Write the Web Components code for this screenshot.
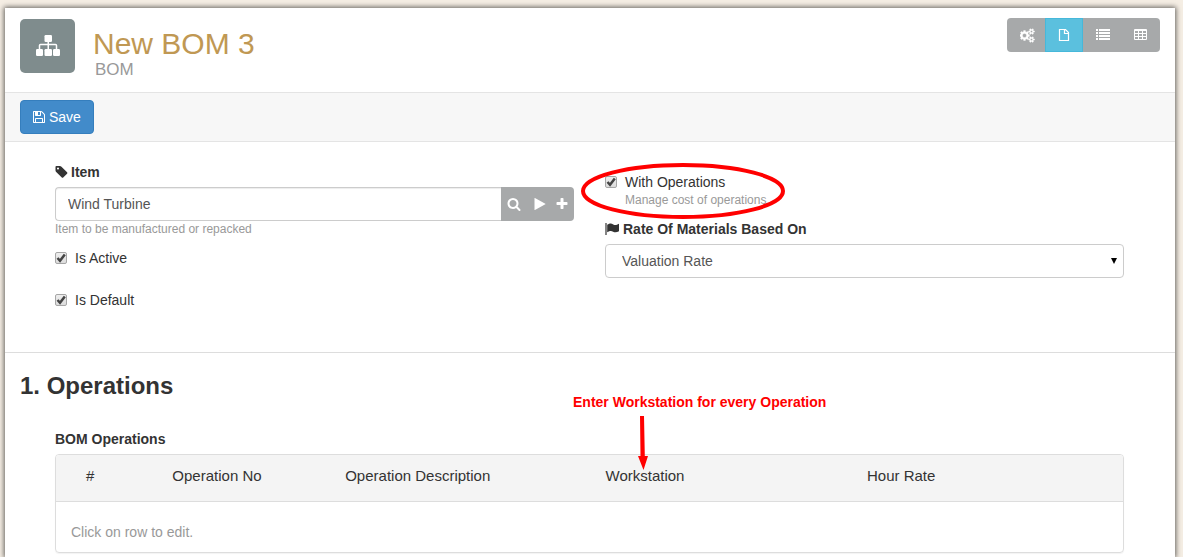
<!DOCTYPE html>
<html lang="en">
<head>
<meta charset="utf-8">
<meta name="viewport" content="width=device-width, initial-scale=1">
<title>New BOM 3</title>
<style>
body { margin: 0; background: #f5eee4; font: 14px/20px "Liberation Sans", Arial, sans-serif; color: #333; }
</style>
</head>
<body>
<bom-page>
  <page-header slot="head" icon="sitemap">
    <span slot="title">New BOM 3</span>
    <span slot="type">BOM</span>
    <view-switch slot="views"></view-switch>
  </page-header>
  <page-toolbar slot="head"><save-button>Save</save-button></page-toolbar>
  <form-section>
    <form-column slot="left">
      <link-field label="Item" value="Wind Turbine" help="Item to be manufactured or repacked"></link-field>
      <check-field label="Is Active"></check-field>
      <check-field label="Is Default"></check-field>
    </form-column>
    <form-column slot="right" class="second">
      <check-field class="marked" label="With Operations" help="Manage cost of operations"></check-field>
      <select-field label="Rate Of Materials Based On" value="Valuation Rate"></select-field>
    </form-column>
  </form-section>
  <operations-section>
    <span slot="title">1. Operations</span>
    <span slot="label">BOM Operations</span>
    <child-table></child-table>
    <span slot="note">Enter Workstation for every Operation</span>
  </operations-section>
</bom-page>

<script>
const icons = {
  sitemap: ["0 0 24 24", `<rect x="8.500" y="1" width="7.500" height="7" rx="1.200"/><rect x="0" y="15" width="7" height="7" rx="1.200"/><rect x="8.500" y="15" width="7.500" height="7" rx="1.200"/><rect x="17" y="15" width="7" height="7" rx="1.200"/><path d="M3.500 15v-3.500q0-1 1-1h15q1 0 1 1V15M12.250 8v7" fill="none" stroke="currentColor" stroke-width="1.500"/>`],
  save: ["0 0 1792 1792", `<path d="M512 1536h768v-384h-768v384zm896 0h128v-896q0-14-10-38.5t-20-34.5l-281-281q-10-10-34-20t-39-10v416q0 40-28 68t-68 28h-576q-40 0-68-28t-28-68v-416h-128v1280h128v-416q0-40 28-68t68-28h832q40 0 68 28t28 68v416zm-384-928v-320q0-13-9.5-22.5t-22.5-9.5h-192q-13 0-22.5 9.5t-9.5 22.5v320q0 13 9.5 22.5t22.5 9.5h192q13 0 22.5-9.5t9.5-22.5zm640 32v928q0 40-28 68t-68 28h-1344q-40 0-68-28t-28-68v-1344q0-40 28-68t68-28h928q40 0 88 20t76 48l280 280q28 28 48 76t20 88z"/>`],
  cogs: ["0 0 1920 1792", `<path stroke="currentColor" stroke-width="50" d="M832 896q0-106-75-181t-181-75-181 75-75 181 75 181 181 75 181-75 75-181zm768 512q0-52-38-90t-90-38-90 38-38 90q0 53 37.5 90.5t90.5 37.5 90.5-37.5 37.5-90.5zm0-1024q0-52-38-90t-90-38-90 38-38 90q0 53 37.5 90.5t90.5 37.5 90.5-37.5 37.5-90.5zm-384 421v185q0 10-7 19.5t-16 10.5l-155 24q-11 35-32 76 34 48 90 115 7 11 7 20 0 12-7 19-23 30-82.5 89.5t-78.5 59.5q-11 0-21-7l-115-90q-37 19-77 31-11 108-23 155-7 24-30 24h-186q-11 0-20-7.5t-10-17.5l-23-153q-34-10-75-31l-118 89q-7 7-20 7-11 0-21-8-144-133-144-160 0-9 7-19 10-14 41-53t47-61q-23-44-35-82l-152-24q-10-1-17-9.5t-7-19.5v-185q0-10 7-19.5t16-10.5l155-24q11-35 32-76-34-48-90-115-7-11-7-20 0-12 7-20 22-30 82-89t79-59q11 0 21 7l115 90q34-18 77-32 11-108 23-154 7-24 30-24h186q11 0 20 7.5t10 17.5l23 153q34 10 75 31l118-89q8-7 20-7 11 0 21 8 144 133 144 160 0 8-7 19-12 16-42 54t-45 60q23 48 34 82l152 23q10 2 17 10.5t7 19.5zm640 533v140q0 16-149 31-12 27-30 52 51 113 51 138 0 4-4 7-122 71-124 71-8 0-46-47t-52-68q-20 2-30 2t-30-2q-14 21-52 68t-46 47q-2 0-124-71-4-3-4-7 0-25 51-138-18-25-30-52-149-15-149-31v-140q0-16 149-31 13-29 30-52-51-113-51-138 0-4 4-7 4-2 35-20t59-34 30-16q8 0 46 46.5t52 67.5q20-2 30-2t30 2q51-71 92-112l6-2q4 0 124 70 4 3 4 7 0 25-51 138 17 23 30 52 149 15 149 31zm0-1024v140q0 16-149 31-12 27-30 52 51 113 51 138 0 4-4 7-122 71-124 71-8 0-46-47t-52-68q-20 2-30 2t-30-2q-14 21-52 68t-46 47q-2 0-124-71-4-3-4-7 0-25 51-138-18-25-30-52-149-15-149-31v-140q0-16 149-31 13-29 30-52-51-113-51-138 0-4 4-7 4-2 35-20t59-34 30-16q8 0 46 46.5t52 67.5q20-2 30-2t30 2q51-71 92-112l6-2q4 0 124 70 4 3 4 7 0 25-51 138 17 23 30 52 149 15 149 31z"/>`],
  file: ["0 0 12 14", `<path d="M1.500 1.500h6L10.500 4.500v8h-9zM6.500 1.500v4h4" fill="none" stroke="currentColor" stroke-width="1.200"/>`],
  list: ["0 0 14 14", `<path d="M0 1h2v2H0zM3 1h11v2H3zM0 4h2v2H0zM3 4h11v2H3zM0 7h2v2H0zM3 7h11v2H3zM0 10h2v2H0zM3 10h11v2H3z"/>`],
  table: ["0 0 14 14", `<path fill-rule="evenodd" d="M1 1h11a1 1 0 0 1 1 1v9a1 1 0 0 1-1 1H1a1 1 0 0 1-1-1V2a1 1 0 0 1 1-1zM1 3v2h3V3zM5 3v2h3V3zM9 3v2h3V3zM1 6v2h3V6zM5 6v2h3V6zM9 6v2h3V6zM1 9v2h3V9zM5 9v2h3V9zM9 9v2h3V9z"/>`],
  tag: ["64 0 1792 1792", `<path d="M576 448q0-53-37.5-90.5t-90.5-37.5-90.5 37.5-37.5 90.5 37.5 90.5 90.5 37.5 90.5-37.5 37.5-90.5zm1067 576q0 53-37 90l-491 492q-39 37-91 37-53 0-90-37l-715-716q-38-37-64.5-101t-26.5-117v-416q0-52 38-90t90-38h416q53 0 117 26.5t102 64.5l715 714q37 39 37 91z"/>`],
  search: ["0 0 1792 1792", `<path d="M1216 832q0-185-131.5-316.5t-316.5-131.5-316.5 131.5-131.5 316.5 131.5 316.5 316.5 131.5 316.5-131.5 131.5-316.5zm512 832q0 52-38 90t-90 38q-54 0-90-38l-343-342q-179 124-399 124-143 0-273.5-55.5t-225-150-150-225-55.5-273.5 55.5-273.5 150-225 225-150 273.5-55.5 273.5 55.5 225 150 150 225 55.5 273.5q0 220-124 399l343 343q37 37 37 90z"/>`],
  play: ["0 0 1792 1792", `<path d="M1576 927l-1328 738q-23 13-39.5 3t-16.5-36v-1472q0-26 16.5-36t39.5 3l1328 738q23 13 23 31t-23 31z"/>`],
  plus: ["0 0 1792 1792", `<path d="M1600 736v192q0 40-28 68t-68 28h-416v416q0 40-28 68t-68 28h-192q-40 0-68-28t-28-68v-416h-416q-40 0-68-28t-28-68v-192q0-40 28-68t68-28h416v-416q0-40 28-68t68-28h192q40 0 68 28t28 68v416h416q40 0 68 28t28 68z"/>`],
  flag: ["0 0 14 14", `<path d="M.4 1h1.200v12H.4zM2.200 2.800C5 1.200 6.200 1.200 8.300 2.500c1.700.9 3.200.6 5.700-.7v7.400c-2.300 1.300-4 1.500-5.900.5-2-1.100-3.600-.6-5.900.6z"/>`],
  tick: ["0 0 12 12", `<path d="M2.500 6l2.500 2.800L9.800 2.500" fill="none" stroke="currentColor" stroke-width="2.500"/>`],
  caret: ["0 0 6 6", `<path d="M0 0h6L3 6z"/>`]
};

const icon = (name, size = 14) =>
  `<svg width="${size}" height="${size}" viewBox="${icons[name][0]}" fill="currentColor" aria-hidden="true">${icons[name][1]}</svg>`;

const base = `*{box-sizing:border-box} svg{display:block;flex:none} button,input,select{font:inherit;margin:0} button{cursor:pointer}`;

function component(name, css, html) {
  customElements.define(name, class extends HTMLElement {
    constructor() {
      super();
      this.attachShadow({ mode: "open" });
    }
    connectedCallback() {
      const body = typeof html === "function" ? html(this) : html;
      this.shadowRoot.innerHTML = `<style>${base}${css}</style>${body}`;
    }
  });
}

component("bom-page", `
  :host{display:flex;flex-direction:column;min-height:100vh;box-sizing:border-box;padding:8px 8px 0 5px;overflow:hidden}
  main{flex:1;background:#fff;box-shadow:0 0 5px 1px rgba(0,0,0,.6)}
`, `<main><slot name="head"></slot><slot></slot></main>`);

component("page-header", `
  :host{display:block}
  header{display:flex;align-items:flex-start;min-height:85px;padding:11px 15px 0;border-bottom:1px solid #e4e4e4}
  .badge{display:grid;place-items:center;width:55px;height:54px;border-radius:5px;background:#7f8c8d;color:#fff}
  .names{flex:1;margin:9px 0 0 18px}
  h1{margin:0;font-size:30px;line-height:32px;font-weight:400;color:#c09853}
  p{margin:0;padding-left:2px;font-size:17px;line-height:20px;color:#999}
`, el => `<header><div class="badge">${icon(el.getAttribute("icon"), 24)}</div>
  <div class="names"><h1><slot name="title"></slot></h1><p><slot name="type"></slot></p></div>
  <slot name="views"></slot></header>`);

component("view-switch", `
  :host{display:block;margin-top:-1px}
  nav{display:flex;border-radius:4px;overflow:hidden;background:#a7a9aa}
  button{display:grid;place-items:center;width:38px;height:34px;padding:0 0 0 2px;border:1px solid transparent;background:none;color:#fff}
  button:last-child{width:39px;padding:0}
  button[aria-pressed=true]{padding:0;background:#5bc0de;border-color:#46b8da}
`, `<nav>
  <button aria-label="Settings" aria-pressed="false">${icon("cogs", 15)}</button>
  <button aria-label="Form" aria-pressed="true">${icon("file")}</button>
  <button aria-label="List" aria-pressed="false">${icon("list")}</button>
  <button aria-label="Grid" aria-pressed="false">${icon("table")}</button></nav>`);

component("page-toolbar", `
  :host{display:block;padding:7px 15px;background:#f7f7f7;border-bottom:1px solid #e4e4e4}
`, `<slot></slot>`);

component("save-button", `
  :host{display:flex}
  button{display:flex;align-items:center;gap:3px;height:34px;padding:0 12px 0 11px;border:1px solid #357ebd;border-radius:4px;background:#428bca;color:#fff}
`, `<button>${icon("save")}<span><slot></slot></span></button>`);

component("form-section", `
  :host{display:block;border-bottom:1px solid #ddd}
  section{display:grid;grid-template-columns:1fr 1fr;column-gap:31px;min-height:210px;padding:20px 51px 0 50px}
`, `<section><slot name="left"></slot><slot name="right"></slot></section>`);

component("form-column", `
  :host{display:flex;flex-direction:column;gap:11px;min-width:0}
  :host(.second){padding-top:10px}
`, `<slot></slot>`);

component("link-field", `
  :host{display:block}
  label{display:flex;align-items:center;gap:2px;margin-bottom:5px;font-weight:700}
  .group{display:flex;height:34px}
  input{flex:1;min-width:0;padding:0 12px;border:1px solid #ccc;border-right:0;border-radius:4px 0 0 4px;background:#fff;color:#555;box-shadow:inset 0 1px 1px rgba(0,0,0,.075);outline:0}
  .tools{display:flex;width:73px;padding-right:3px;border-radius:0 4px 4px 0;background:#a7a9aa}
  button{display:grid;place-items:center;width:26px;padding:0;border:0;background:none;color:#fff}
  button:last-child{width:18px}
  p{margin:0;font-size:12px;line-height:16px;color:#999}
`, el => `<label for="link">${icon("tag")}<span>${el.getAttribute("label")}</span></label>
  <div class="group"><input id="link" type="text" value="${el.getAttribute("value")}">
  <div class="tools"><button aria-label="Search">${icon("search")}</button><button aria-label="Open">${icon("play")}</button><button aria-label="New">${icon("plus")}</button></div></div>
  <p>${el.getAttribute("help")}</p>`);

component("check-field", `
  :host{display:block;position:relative;min-height:31px}
  :host(.marked){min-height:36px}
  label{display:grid;grid-template-columns:12px 1fr;column-gap:8px;align-items:center}
  input,label>svg{grid-area:1/1}
  label>svg{pointer-events:none;color:#444}
  input{appearance:none;width:12px;height:12px;border:1px solid #a6a6a6;border-radius:2px;background:linear-gradient(#eee,#dcdcdc)}
  input:not(:checked)+svg{visibility:hidden}
  p{margin:0 0 0 20px;font-size:12px;line-height:16px;color:#999}
  .ring{position:absolute;left:-24px;top:-9px}
`, el => `<label><input type="checkbox" checked>${icon("tick", 12)}<span>${el.getAttribute("label")}</span></label>
  ${el.hasAttribute("help") ? `<p>${el.getAttribute("help")}</p>` : ""}
  ${el.classList.contains("marked") ? `<svg class="ring" width="204" height="56" aria-hidden="true"><ellipse cx="102" cy="28" rx="100" ry="26" fill="none" stroke="#f00" stroke-width="4"/></svg>` : ""}`);

component("select-field", `
  :host{display:block}
  label{display:flex;align-items:center;gap:4px;margin-bottom:5px;font-weight:700}
  .box{display:grid;align-items:center}
  select,.box svg{grid-area:1/1}
  .box svg{justify-self:end;margin-right:7px;color:#000;pointer-events:none}
  select{appearance:none;width:100%;height:34px;padding:0 16px;border:1px solid #ccc;border-radius:4px;background:#fff;color:#555;outline:0}
`, el => `<label for="choice">${icon("flag")}<span>${el.getAttribute("label")}</span></label>
  <div class="box"><select id="choice"><option>${el.getAttribute("value")}</option></select>${icon("caret", 6)}</div>`);

component("operations-section", `
  :host{display:block;position:relative;padding:20px 51px 4px 50px}
  h2{margin:0 0 30px -35px;font-size:24px;line-height:26px;font-weight:700}
  h3{margin:0 0 5px;font-size:14px;line-height:20px;font-weight:700}
  .note{position:absolute;left:568px;top:39px;color:#f00;font-weight:700;white-space:nowrap}
  .note svg{margin:4px 0 0 64px}
`, `<h2><slot name="title"></slot></h2><h3><slot name="label"></slot></h3><slot></slot>
  <div class="note"><slot name="note"></slot><svg width="12" height="54" aria-hidden="true"><path d="M3 0h4l.8 40H11L6.500 54 1 40h2.500z" fill="#f00"/></svg></div>`);

component("child-table", `
  :host{display:block;border:1px solid #ddd;border-radius:4px;overflow:hidden;box-shadow:0 1px 1px rgba(0,0,0,.05)}
  table{width:100%;border-collapse:separate;border-spacing:0;table-layout:fixed}
  th{padding:11px 15px 15px;border-bottom:1px solid #ddd;background:#f4f4f4;font-size:15px;line-height:20px;font-weight:400;text-align:left}
  th:nth-child(1){width:9.5%;padding-left:30px}
  th:nth-child(2){width:16.2%}
  th:nth-child(3){width:24.4%}
  th:nth-child(4){width:24.5%}
  td{padding:20px 15px 10px;line-height:20px;color:#999}
`, `<table><thead><tr><th>#</th><th>Operation No</th><th>Operation Description</th><th>Workstation</th><th>Hour Rate</th></tr></thead>
  <tbody><tr><td colspan="5">Click on row to edit.</td></tr></tbody></table>`);
</script>
</body>
</html>
